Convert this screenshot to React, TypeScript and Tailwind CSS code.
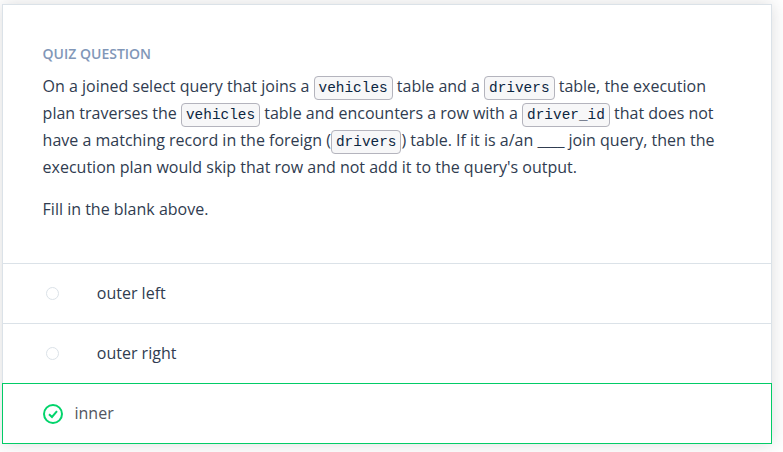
import type { ReactNode } from "react";

function Code({ children }: { children: ReactNode }) {
  return (
    <code className="rounded-[4px] border border-[#b4b4bd] bg-[#f7f7f8] px-1 py-[3.2px] font-['Liberation_Mono',monospace] text-[14.4px] leading-none text-[#0b2540]">
      {children}
    </code>
  );
}

function Option({ label }: { label: string }) {
  return (
    <li className="flex h-[60px] items-center border-t border-[#dbe2e8] pl-[43px]">
      <span className="h-[13px] w-[13px] rounded-full border border-[#dbe2e8]" />
      <span className="ml-[37.8px]">{label}</span>
    </li>
  );
}

export default function App() {
  return (
    <main className="h-[452px] overflow-hidden bg-white pt-1 pl-0.5 font-['Open_Sans',sans-serif] text-[16px] leading-[27px] text-[#303c50]">
      <section className="h-[440px] w-[770px] bg-white shadow-[0_0_16px_rgba(40,44,50,0.17)]">
        <div className="h-[259px] border-x border-t border-[#dbe2e8] pt-[35px] pl-[39.6px]">
          <h1 className="text-[14px] font-semibold text-[#8197b8]">QUIZ QUESTION</h1>
          <p className="mt-[6px] w-[685px]">
            On a joined select query that joins a <Code>vehicles</Code> table and a <Code>drivers</Code> table, the execution
            <br />
            plan traverses the <Code>vehicles</Code> table and encounters a row with a <Code>driver_id</Code> that does not
            <br />
            have a matching record in the foreign (<Code>drivers</Code>) table. If it is a/an{" "}
            <span className="tracking-[-0.3px]">____</span> join query, then the
            <br />
            execution plan would skip that row and not add it to the query's output.
          </p>
          <p className="mt-[15px]">Fill in the blank above.</p>
        </div>
        <ul>
          <div className="border-x border-[#dbe2e8]">
            <Option label="outer left" />
            <Option label="outer right" />
          </div>
          <li className="flex h-[61px] items-center border border-[#02cc67] pl-10 text-[#525560]">
            <svg className="mt-px h-5 w-5" viewBox="0 0 20 20" fill="none" stroke="#02d46b" strokeWidth="2">
              <circle cx="10" cy="10" r="9" />
              <path d="M6 10.2 9 13l5-5.8" />
            </svg>
            <span className="ml-[11.5px]">inner</span>
          </li>
        </ul>
      </section>
    </main>
  );
}
